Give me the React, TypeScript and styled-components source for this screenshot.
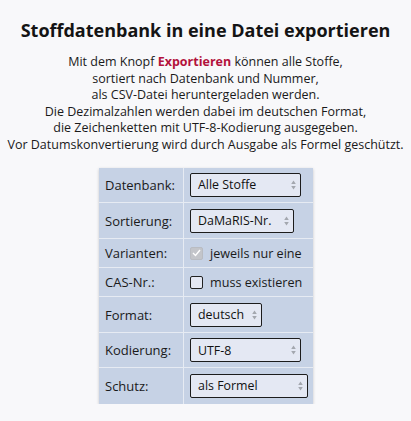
import styled, { createGlobalStyle } from 'styled-components';

const GlobalStyle = createGlobalStyle`
  html, body {
    margin: 0;
    padding: 0;
    background: #f8f8fa;
  }
  body {
    font-family: "Open Sans", "Liberation Sans", sans-serif;
    color: #1a1a1a;
  }
`;

const Page = styled.div`
  display: flex;
  flex-direction: column;
  align-items: center;
  padding-top: 18px;
`;

const Title = styled.h1`
  margin: 0;
  font-size: 18px;
  font-weight: 700;
  line-height: 25px;
  color: #141414;
`;

const Intro = styled.p`
  margin: 11px 0 0;
  font-size: 12.5px;
  line-height: 16.6px;
  text-align: center;
`;

const Strong = styled.b`
  color: #b3123c;
  font-weight: 700;
`;

const Table = styled.table`
  margin-top: 14px;
  margin-left: 1px;
  border-collapse: collapse;
  background: #c6d2e5;
  box-shadow: 0 1px 3px rgba(0, 0, 0, 0.2);
  font-size: 13px;

  tr + tr td {
    border-top: 1px solid #e6ebf3;
  }
`;

const Row = styled.tr<{ $h: number }>`
  height: ${(p) => p.$h}px;
`;

const Label = styled.td`
  width: 78px;
  padding: 0 0 0 6px;
  border-right: 1px solid #e6ebf3;
`;

const Value = styled.td`
  width: 123px;
  padding: 0 0 0 6px;
`;

const Select = styled.button<{ $w: number }>`
  display: flex;
  align-items: center;
  width: ${(p) => p.$w}px;
  height: 24px;
  box-sizing: border-box;
  padding: 0 4px 0 7px;
  border: 1px solid #1c1c1c;
  border-radius: 2px;
  background: #e4e8f3;
  font-family: inherit;
  font-size: 12.4px;
  color: #111;
  white-space: nowrap;
  cursor: default;
`;

const Arrows = styled.svg`
  margin-left: auto;
  flex-shrink: 0;
`;

const CheckLine = styled.label`
  display: flex;
  align-items: center;
  gap: 7px;
  white-space: nowrap;
  font-size: 12.6px;
`;

const Box = styled.span<{ $disabled?: boolean }>`
  width: 13px;
  height: 13px;
  box-sizing: border-box;
  border-radius: 2px;
  border: 1px solid ${(p) => (p.$disabled ? '#b9bcc2' : '#222')};
  background: ${(p) => (p.$disabled ? '#c3c5ca' : '#e4e8f3')};
  display: flex;
  align-items: center;
  justify-content: center;
`;

const Dropdown = ({ value, width }: { value: string; width: number }) => (
  <Select type="button" $w={width}>
    {value}
    <Arrows width="5" height="10" viewBox="0 0 5 10">
      <path d="M2.5 0.5 L4.8 4 H0.2 Z" fill="#a3a7ae" />
      <path d="M2.5 9.5 L4.8 6 H0.2 Z" fill="#a3a7ae" />
    </Arrows>
  </Select>
);

export default function App() {
  return (
    <>
      <GlobalStyle />
      <Page>
        <Title>Stoffdatenbank in eine Datei exportieren</Title>
        <Intro>
          Mit dem Knopf <Strong>Exportieren</Strong> können alle Stoffe,
          <br />
          sortiert nach Datenbank und Nummer,
          <br />
          als CSV-Datei heruntergeladen werden.
          <br />
          Die Dezimalzahlen werden dabei im deutschen Format,
          <br />
          die Zeichenketten mit UTF-8-Kodierung ausgegeben.
          <br />
          Vor Datumskonvertierung wird durch Ausgabe als Formel geschützt.
        </Intro>
        <Table>
          <tbody>
            <Row $h={35}>
              <Label>Datenbank:</Label>
              <Value><Dropdown value="Alle Stoffe" width={111} /></Value>
            </Row>
            <Row $h={36}>
              <Label>Sortierung:</Label>
              <Value><Dropdown value="DaMaRIS-Nr." width={104} /></Value>
            </Row>
            <Row $h={29}>
              <Label>Varianten:</Label>
              <Value>
                <CheckLine>
                  <Box $disabled>
                    <svg width="9" height="8" viewBox="0 0 9 8">
                      <path d="M1 4 L3.5 6.5 L8 1" stroke="#fff" strokeWidth="1.4" fill="none" />
                    </svg>
                  </Box>
                  jeweils nur eine
                </CheckLine>
              </Value>
            </Row>
            <Row $h={29}>
              <Label>CAS-Nr.:</Label>
              <Value>
                <CheckLine>
                  <Box />
                  muss existieren
                </CheckLine>
              </Value>
            </Row>
            <Row $h={36}>
              <Label>Format:</Label>
              <Value><Dropdown value="deutsch" width={72} /></Value>
            </Row>
            <Row $h={35}>
              <Label>Kodierung:</Label>
              <Value><Dropdown value="UTF-8" width={111} /></Value>
            </Row>
            <Row $h={36}>
              <Label>Schutz:</Label>
              <Value><Dropdown value="als Formel" width={118} /></Value>
            </Row>
          </tbody>
        </Table>
      </Page>
    </>
  );
}
